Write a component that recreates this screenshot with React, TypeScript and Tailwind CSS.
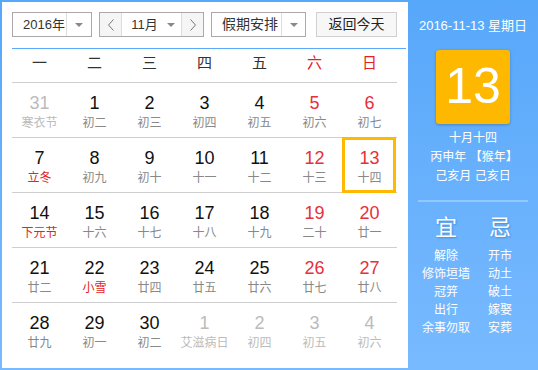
import React from 'react'

type Day = { n: number; l: string; other?: boolean; weekend?: boolean; fest?: boolean; sel?: boolean }

const weeks: Day[][] = [
  [
    { n: 31, l: '寒衣节', other: true },
    { n: 1, l: '初二' },
    { n: 2, l: '初三' },
    { n: 3, l: '初四' },
    { n: 4, l: '初五' },
    { n: 5, l: '初六', weekend: true },
    { n: 6, l: '初七', weekend: true },
  ],
  [
    { n: 7, l: '立冬', fest: true },
    { n: 8, l: '初九' },
    { n: 9, l: '初十' },
    { n: 10, l: '十一' },
    { n: 11, l: '十二' },
    { n: 12, l: '十三', weekend: true },
    { n: 13, l: '十四', weekend: true, sel: true },
  ],
  [
    { n: 14, l: '下元节', fest: true },
    { n: 15, l: '十六' },
    { n: 16, l: '十七' },
    { n: 17, l: '十八' },
    { n: 18, l: '十九' },
    { n: 19, l: '二十', weekend: true },
    { n: 20, l: '廿一', weekend: true },
  ],
  [
    { n: 21, l: '廿二' },
    { n: 22, l: '小雪', fest: true },
    { n: 23, l: '廿四' },
    { n: 24, l: '廿五' },
    { n: 25, l: '廿六' },
    { n: 26, l: '廿七', weekend: true },
    { n: 27, l: '廿八', weekend: true },
  ],
  [
    { n: 28, l: '廿九' },
    { n: 29, l: '初一' },
    { n: 30, l: '初二' },
    { n: 1, l: '艾滋病日', other: true },
    { n: 2, l: '初四', other: true },
    { n: 3, l: '初五', other: true },
    { n: 4, l: '初六', other: true },
  ],
]

const yi = ['解除', '修饰垣墙', '冠笄', '出行', '余事勿取']
const ji = ['开市', '动土', '破土', '嫁娶', '安葬']

function Caret() {
  return <span className="w-0 h-0 border-x-[4px] border-x-transparent border-t-[4px] border-t-[#888]" />
}

function Chevron({ dir }: { dir: 'l' | 'r' }) {
  return (
    <svg width="8" height="12" viewBox="0 0 8 12">
      <polyline
        points={dir === 'l' ? '6.5,0.5 1.5,6 6.5,11.5' : '1.5,0.5 6.5,6 1.5,11.5'}
        fill="none"
        stroke="#777"
        strokeWidth="1"
      />
    </svg>
  )
}

function DayCell({ d }: { d: Day }) {
  const numColor = d.other ? 'text-[#bbb]' : d.weekend ? 'text-[#e6303c]' : 'text-[#111]'
  const lunColor = d.other ? 'text-[#bbb]' : d.fest ? 'text-[#e32222]' : 'text-[#888]'
  return (
    <div className="relative flex-1 flex flex-col items-center pt-[10px]">
      {d.sel && <div className="absolute z-10 left-0 right-px top-[-1px] bottom-[-1px] border-[3px] border-[#ffb900]" />}
      <div className={`text-[18px] leading-[20px] ${numColor}`}>{d.n}</div>
      <div className={`mt-[3px] text-[12px] leading-[14px] whitespace-nowrap ${lunColor}`}>{d.l}</div>
    </div>
  )
}

export default function App() {
  return (
    <div
      className="w-[538px] h-[370px] flex bg-gradient-to-b from-[#57a7fa] to-[#78baff] overflow-hidden"
      style={{ fontFamily: '"Liberation Sans", "Noto Sans CJK SC", sans-serif' }}
    >
      <div className="ml-[2px] my-[2px] w-[406px] bg-white pt-[10px] pl-[10px] pr-[2px]">
        <div className="flex h-[25px] text-[13px] text-[#333] pr-[9px]">
          <div className="w-[80px] flex border border-[#a9a9a9]">
            <div className="flex-1 flex items-center pl-[10px]">2016年</div>
            <div className="w-[25px] flex items-center justify-center border-l border-[#ddd]">
              <Caret />
            </div>
          </div>
          <div className="ml-[7px] w-[105px] flex border border-[#aaa]">
            <div className="w-[22px] flex items-center justify-center bg-[#f5f5f5] border-r border-[#ddd]">
              <Chevron dir="l" />
            </div>
            <div className="flex-1 flex items-center justify-center gap-[9px] pl-[3px]">
              <span>11月</span>
              <Caret />
            </div>
            <div className="w-[22px] flex items-center justify-center bg-[#f5f5f5] border-l border-[#ddd]">
              <Chevron dir="r" />
            </div>
          </div>
          <div className="ml-[7px] w-[95px] flex border border-[#aaa]">
            <div className="flex-1 flex items-center pl-[10px] text-[14px]">假期安排</div>
            <div className="w-[24px] flex items-center justify-center border-l border-[#ddd]">
              <Caret />
            </div>
          </div>
          <div className="ml-[10px] flex-1 flex items-center justify-center bg-[#f7f7f7] border border-[#d0d0d0] text-[14px] text-[#222]">
            返回今天
          </div>
        </div>
        <div className="mt-[11px] h-px bg-[#5aa9fb]" />
        <div className="mr-[9px]">
          <div className="flex h-[33px] pb-[5px] text-[15px]">
            {['一', '二', '三', '四', '五', '六', '日'].map((w, i) => (
              <div key={w} className={`flex-1 flex items-center justify-center ${i > 4 ? 'text-[#e32222]' : 'text-[#333]'}`}>
                {w}
              </div>
            ))}
          </div>
          {weeks.map((wk, i) => (
            <div key={i} className="flex h-[55px] border-t border-[#cfcfcf]">
              {wk.map((d, j) => (
                <DayCell key={j} d={d} />
              ))}
            </div>
          ))}
        </div>
      </div>

      <div className="flex-1 flex flex-col items-center text-white">
        <div className="mt-[18px] text-[13px] leading-[16px]">2016-11-13 星期日</div>
        <div className="mt-[16px] w-[74px] h-[74px] rounded-[3px] bg-[#ffb800] shadow-[0_1px_3px_rgba(0,0,0,0.25)] flex items-center justify-center text-[50px] leading-none pb-[2px]">
          13
        </div>
        <div className="mt-[5px] text-[12px] leading-[19px] text-center">
          <div>十月十四</div>
          <div className="pl-[2px]">丙申年 【猴年】</div>
          <div>己亥月 己亥日</div>
        </div>
        <div className="mt-[14px] w-[110px] h-[2px] bg-[#92c9fc]" />
        <div className="mt-[13px] flex">
          {[['宜', yi], ['忌', ji]].map(([h, items]) => (
            <div key={h as string} className="w-[54px] flex flex-col items-center">
              <div className="text-[22px] leading-[26px] [text-shadow:1px_1px_2px_rgba(0,60,120,0.35)]">{h as string}</div>
              <div className="mt-[6px] text-[12px] leading-[18px] flex flex-col items-center">
                {(items as string[]).map((t) => (
                  <div key={t} className="whitespace-nowrap">{t}</div>
                ))}
              </div>
            </div>
          ))}
        </div>
      </div>
    </div>
  )
}
